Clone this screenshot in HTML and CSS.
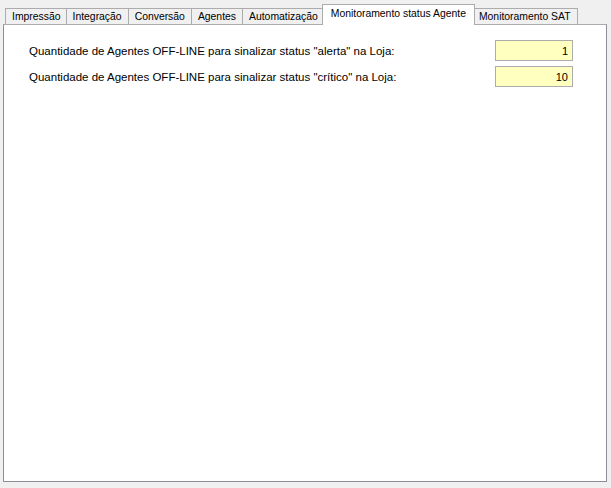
FILE: index.html
```html
<!DOCTYPE html>
<html>
<head>
    <title>Configurações</title>
    <link rel="stylesheet" href="styles.css">
</head>
<body>
    <div class="tab-control">
        <div class="tabs">
            <div class="tab">Impressão</div>
            <div class="tab">Integração</div>
            <div class="tab">Conversão</div>
            <div class="tab">Agentes</div>
            <div class="tab">Automatização</div>
            <div class="tab active">Monitoramento status Agente</div>
            <div class="tab">Monitoramento SAT</div>
        </div>
        <div class="panel">
            <div class="field-row">
                <label for="qtdAlerta">Quantidade de Agentes OFF-LINE para sinalizar status "alerta" na Loja:</label>
                <input type="text" id="qtdAlerta" class="num-input" value="1">
            </div>
            <div class="field-row">
                <label for="qtdCritico">Quantidade de Agentes OFF-LINE para sinalizar status "crítico" na Loja:</label>
                <input type="text" id="qtdCritico" class="num-input" value="10">
            </div>
        </div>
    </div>
</body>
</html>
```
FILE: styles.css
```css
body {
    margin: 0;
    background-color: #f0f0f0;
    font-family: "Liberation Sans", Arial, sans-serif;
    font-size: 11px;
    color: #000;
}
.tab-control {
    width: 607px;
    height: 488px;
    padding: 0 0 0 3px;
    box-sizing: border-box;
}
.tabs {
    display: flex;
    align-items: flex-end;
    height: 24px;
    padding-left: 2px;
    font-size: 10.4px;
}
.tab {
    height: 15px;
    line-height: 16px;
    padding: 0 6px;
    border: 1px solid #acacac;
    border-bottom: none;
    margin-left: -1px;
    background-color: #f0f0f0;
    white-space: nowrap;
}
.tab:first-child {
    margin-left: 0;
    padding: 0 5px 0 6px;
}
.tab.active {
    position: relative;
    z-index: 1;
    height: 20px;
    line-height: 18px;
    margin: 0 -2px -1px -3px;
    padding: 0 8px;
    background-color: #fff;
}
.panel {
    height: 458px;
    border: 1px solid #8c8f96;
    border-top-color: #acacac;
    background-color: #fff;
    padding: 15px 33px 0 25px;
    box-sizing: border-box;
}
.field-row {
    display: flex;
    justify-content: space-between;
    align-items: center;
    margin-bottom: 5px;
    font-size: 11.5px;
}
.num-input {
    width: 78px;
    height: 21px;
    box-sizing: border-box;
    border: 1px solid #acacac;
    background-color: #ffffc0;
    text-align: right;
    padding: 0 4px;
    font-family: "Liberation Sans", Arial, sans-serif;
    font-size: 11px;
    outline: none;
}
```
